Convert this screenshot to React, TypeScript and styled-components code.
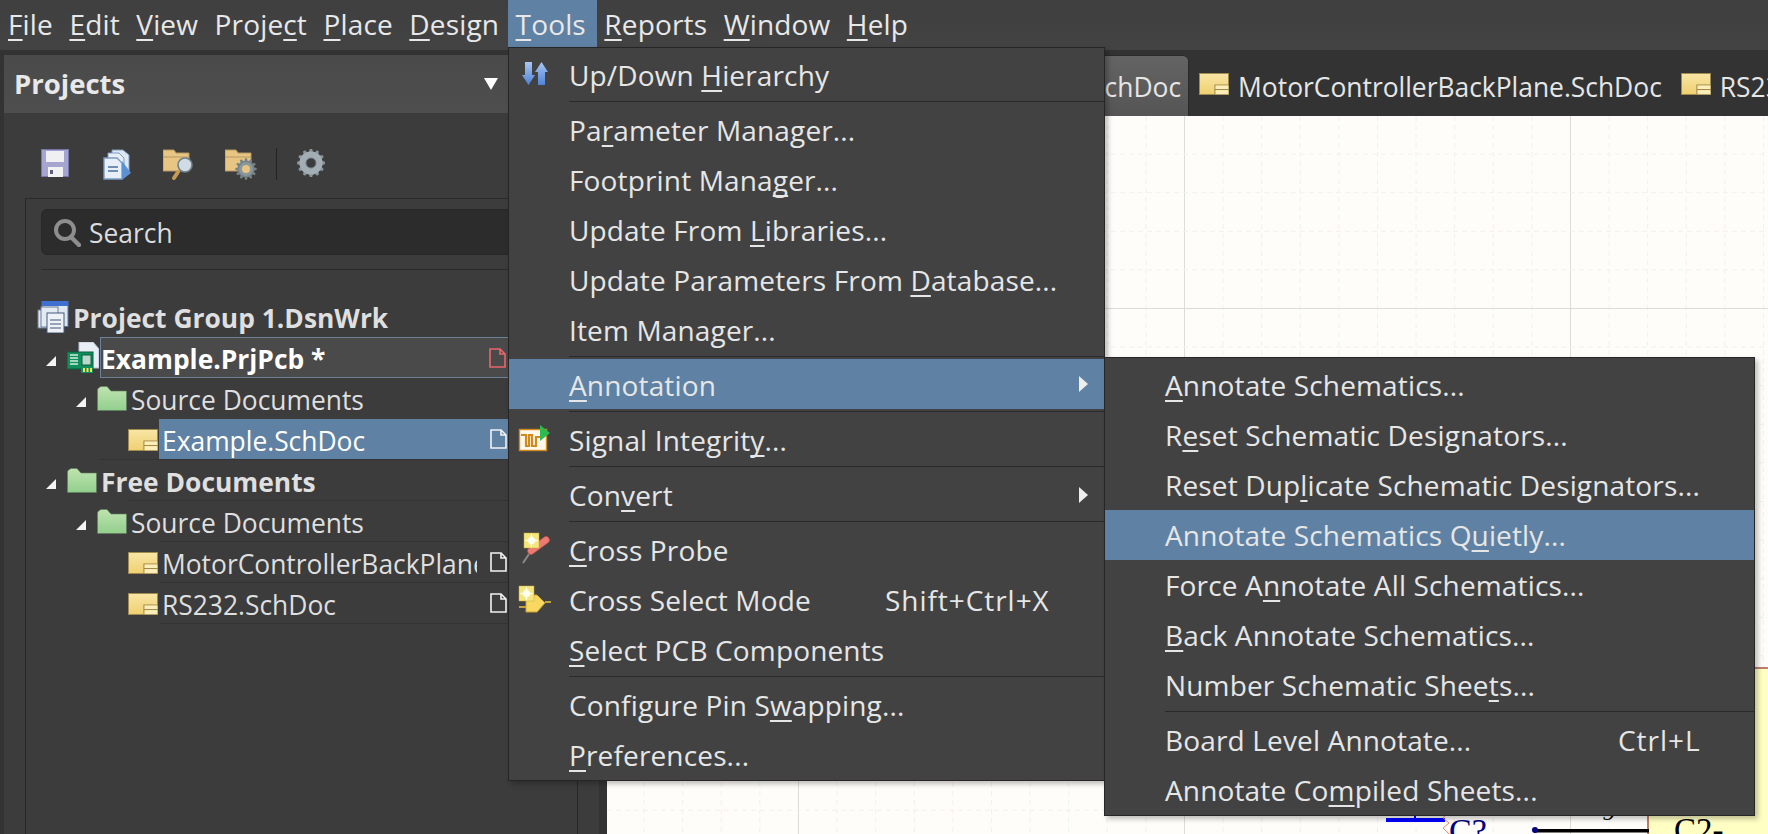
import React from "react";
import styled, { createGlobalStyle } from "styled-components";

const FONT = `"Open Sans", "Noto Sans", sans-serif`;

const Global = createGlobalStyle`
  html, body { margin: 0; padding: 0; background: #3c3c3c; overflow: hidden; }
  * { box-sizing: border-box; }
`;

const Root = styled.div`
  position: relative; width: 1768px; height: 834px; overflow: hidden;
  display: flex; flex-direction: column;
  font-family: ${FONT}; font-size: 26.4px; color: #e6e6e6;
`;
const MenuBar = styled.div`
  height: 50px; flex: none; display: flex; gap: 0.5px; background: linear-gradient(#3f3f3f, #434343);
  padding-bottom: 3px; font-size: 28px; letter-spacing: 0.15px;
`;
const MenuTitle = styled.div<{ $open?: boolean }>`
  padding: 0 8px; display: flex; align-items: center; white-space: nowrap; height: 47px;
  background: ${(p) => (p.$open ? "#5f81a3" : "transparent")};
  color: #e8e8e8;
  padding-right: ${(p) => (p.$open ? "11px" : "8px")};
  margin-right: ${(p) => (p.$open ? "-1px" : "0")};
`;
const U = styled.span`
  text-decoration: underline; text-decoration-thickness: 1.5px; text-underline-offset: 4px;
  text-decoration-skip-ink: none;
`;
const Main = styled.div`flex: 1; display: flex; min-height: 0; background: #333;`;
const LeftStrip = styled.div`width: 4px; flex: none; background: #333;`;
const Panel = styled.div`
  width: 595px; flex: none; margin-top: 5px; background: #3c3c3c; display: flex; flex-direction: column;
`;
const PanelHeader = styled.div`
  height: 58px; flex: none; background: linear-gradient(#4a4a4a, #4e4e4e); display: flex; align-items: center;
  padding: 0 101px 2px 10px; font-weight: 700; font-size: 27.5px; color: #e8e8e8;
`;
const HeaderCaret = styled.div`
  margin: 2px 0 0 auto; width: 0; height: 0;
  border-left: 7px solid transparent; border-right: 7px solid transparent; border-top: 12px solid #fff;
`;
const Toolbar = styled.div`
  height: 85px; flex: none; display: flex; align-items: flex-start; padding: 36px 0 0 37px;
`;
const ToolSlot = styled.div<{ $w: number }>`width: ${(p) => p.$w}px; height: 32px; flex: none;`;
const ToolSep = styled.div`width: 1px; height: 32px; background: #252525; flex: none; margin: -1px 20px 0 0;`;
const InnerBox = styled.div`
  flex: 1; margin-left: 21px; width: 553px; border-left: 1px solid #262626; border-top: 1px solid #2a2a2a;
  border-right: 1px solid #262626; padding-top: 10px; display: flex; flex-direction: column;
`;
const SearchBox = styled.div`
  margin: 0 16px 0 15px; height: 46px; background: #2c2c2c; border: 1px solid #272727; border-radius: 6px;
  display: flex; align-items: center; padding: 1px 0 0 11px; gap: 8px; color: #dcdcdc;
`;
const SearchRule = styled.div`margin: 14px 0 26px 15px; height: 1px; background: #2a2a2a;`;
const Tree = styled.div`display: flex; flex-direction: column;`;
const Row = styled.div<{ $indent: number; $line?: number; $bold?: boolean }>`
  height: 41px; flex: none; position: relative; display: flex; align-items: center;
  padding-left: ${(p) => p.$indent}px;
  font-weight: ${(p) => (p.$bold ? 700 : 400)};
  &::after {
    content: ""; position: absolute; left: ${(p) => p.$line ?? 0}px; right: 0; bottom: 0; height: 1px;
    background: ${(p) => (p.$line === undefined ? "transparent" : "#333")};
  }
`;
const Expander = styled.svg`width: 10px; height: 10px; flex: none; margin-right: 11px; margin-top: 6px;`;
const Label = styled.div<{ $sel?: "focus" | "active"; $white?: boolean }>`
  flex: 1; min-width: 0; align-self: stretch; display: flex; align-items: center; position: relative;
  padding: 2px 100px 0 ${(p) => (p.$sel === "focus" ? 0 : 3)}px; margin-left: 1px; white-space: nowrap;
  color: ${(p) => (p.$white ? "#fff" : "#dfdfdf")};
  background: ${(p) => (p.$sel === "active" ? "#5f81a3" : p.$sel === "focus" ? "#4a4a4a" : "transparent")};
  border: ${(p) => (p.$sel === "focus" ? "1px solid #6c8196" : "none")};
`;
const LabelClip = styled.span`flex: 1; min-width: 0; overflow: hidden;`;
const TreeDoc = styled.svg`position: absolute; right: 70px; top: 10px; width: 17px; height: 20px;`;

const Gutter = styled.div`width: 8px; flex: none; background: #333;`;
const Workspace = styled.div`flex: 1; min-width: 0; display: flex; flex-direction: column;`;
const TabStrip = styled.div`
  height: 66px; flex: none; background: #333; display: flex; align-items: flex-end; padding-left: 320px;
  overflow: hidden; white-space: nowrap;
`;
const Tab = styled.div<{ $active?: boolean }>`
  height: 61px; flex: none; display: flex; align-items: center; gap: ${(p) => (p.$active ? 10 : 9)}px;
  padding: 3px ${(p) => (p.$active ? 8 : 9)}px 0 ${(p) => (p.$active ? 11 : 10)}px;
  background: ${(p) => (p.$active ? "linear-gradient(#646464, #555)" : "transparent")};
  border-radius: 6px 6px 0 0;
  box-shadow: ${(p) => (p.$active ? "inset 0 1px 0 #2a2a2a, inset -1px 0 0 #2a2a2a" : "none")};
  color: #e6e6e6;
`;
const Canvas = styled.div`flex: 1; min-height: 0; position: relative; background: #fffdf9;`;
const CanvasArt = styled.svg`display: block; width: 100%; height: 100%;`;

const Menu = styled.div<{ $left: number; $top: number; $width: number }>`
  position: absolute; left: ${(p) => p.$left}px; top: ${(p) => p.$top}px; width: ${(p) => p.$width}px;
  background: #424242; border: 1px solid #262626; padding: 2px 0 0;
  box-shadow: 3px 3px 5px rgba(0, 0, 0, 0.25);
  font-size: 28px; letter-spacing: 0.15px;
`;
const Item = styled.div<{ $hl?: boolean; $left: number; $nudge?: boolean }>`
  height: 50px; display: flex; align-items: center; position: relative;
  padding-left: ${(p) => p.$left}px; white-space: nowrap; color: #e6e6e6;
  background: ${(p) => (p.$hl ? "#5f81a3" : "transparent")};
  ${(p) => p.$nudge && "margin-top: -1px; margin-bottom: 1px; padding-top: 2px;"}
`;
const ItemIcon = styled.svg`position: absolute; left: 12px; top: 8px; width: 34px; height: 34px; overflow: visible;`;
const Shortcut = styled.span<{ $x: number }>`position: absolute; left: ${(p) => p.$x}px; letter-spacing: 0.95px;`;
const SubArrow = styled.div`
  position: absolute; right: 16px; top: 17px; width: 0; height: 0;
  border-top: 8px solid transparent; border-bottom: 8px solid transparent; border-left: 9px solid #eee;
`;
const Sep = styled.div<{ $left: number }>`
  height: 5px; padding-top: 1px; margin-left: ${(p) => p.$left}px;
  &::before { content: ""; display: block; height: 1px; background: #2a2a2a; }
`;

function mn(s: string) {
  const i = s.indexOf("_");
  if (i < 0) return s;
  return (
    <>
      {s.slice(0, i)}
      <U>{s[i + 1]}</U>
      {s.slice(i + 2)}
    </>
  );
}

const Tri = () => (
  <Expander viewBox="0 0 10 10"><polygon points="10,0 10,10 0,10" fill="#f4f4f4" /></Expander>
);

const Folder = ({ w = 30 }: { w?: number }) => (
  <svg width={w} height="25" viewBox="0 0 30 25" style={{ flex: "none" }}>
    <defs><linearGradient id="fg" x1="0" y1="0" x2="0" y2="1"><stop offset="0" stopColor="#bfe3b0" /><stop offset="1" stopColor="#92cf8c" /></linearGradient></defs>
    <path d="M0.5 24.5V4Q0.5 3 1.5 2L4 0.5H10L14 5H29.5V24.5Z" fill="url(#fg)" stroke="#5f7a5c" strokeWidth="0.6" />
  </svg>
);
const Sch = ({ tab }: { tab?: boolean }) => (
  <svg width="30" height="22" viewBox="0 0 30 22" style={{ flex: "none", marginBottom: tab ? 6 : 0 }}>
    <defs><linearGradient id="sg" x1="0" y1="0" x2="0" y2="1"><stop offset="0" stopColor="#f8e6a6" /><stop offset="1" stopColor="#f0d070" /></linearGradient></defs>
    <rect x="0.5" y="0.5" width="29" height="21" fill="url(#sg)" stroke="#a08a50" />
    <path d="M16 21.5V12H29.5M16 16.5H29.5" fill="none" stroke="#a08a50" strokeWidth="1.2" />
    <rect x="16.6" y="12.6" width="12.8" height="3.4" fill="#fbeeb8" />
    <rect x="16.6" y="17.2" width="12.8" height="4" fill="#fbeeb8" />
  </svg>
);
const Doc = ({ red }: { red?: boolean }) => (
  <TreeDoc viewBox="0 0 17 20">
    <path d="M1 1H11L16 6V19H1Z M11 1V6H16" fill="none" stroke={red ? "#e8666c" : "#f2f2f2"} strokeWidth="1.6" />
  </TreeDoc>
);

const SaveIcon = () => (
  <svg width="28" height="28" viewBox="0 0 28 28">
    <rect width="28" height="28" fill="#7676aa" />
    <rect x="1" y="1" width="26" height="26" fill="#a5a5cf" />
    <rect x="5" y="2" width="18" height="11" fill="#f0f0f2" />
    <rect x="7" y="18" width="15" height="10" fill="#f2f2f2" />
    <rect x="9" y="21" width="3" height="4" fill="#5d5d80" />
  </svg>
);
const DocsIcon = () => (
  <svg width="29" height="32" viewBox="0 0 29 32">
    <path d="M9 1H20L26 6V24H9Z" fill="#dfe8f2" stroke="#7c9cc4" />
    <path d="M5 4H16L21 9V27H5Z" fill="#e8eef6" stroke="#7c9cc4" />
    <path d="M1 9H14L19 14V30H1Z" fill="#e9eff8" stroke="#7c9cc4" strokeWidth="1.4" />
    <path d="M5 18H15M5 22H15" stroke="#6f8fb5" strokeWidth="2" />
    <polygon points="19,12 28,24 19,31" fill="#5c90d0" />
  </svg>
);
const FolderMag = () => (
  <svg width="33" height="32" viewBox="0 0 33 32">
    <path d="M0 22V1H11L13 4H26V22Z" fill="#e8c583" stroke="#b39a62" />
    <path d="M0 8H26" stroke="#b39a62" />
    <path d="M15 23L11 29" stroke="#c69a52" strokeWidth="4" strokeLinecap="round" />
    <circle cx="22" cy="16" r="7" fill="#cfdce6" stroke="#6f8088" strokeWidth="1.6" />
  </svg>
);
const gearPath = (cx: number, cy: number, r: number, t: number) => {
  const pts: string[] = [];
  for (let i = 0; i < 12; i++) {
    const a = (i / 12) * Math.PI * 2;
    const w = Math.PI / 18;
    pts.push(`${cx + r * Math.cos(a - w)},${cy + r * Math.sin(a - w)}`);
    pts.push(`${cx + (r + t) * Math.cos(a - w / 2)},${cy + (r + t) * Math.sin(a - w / 2)}`);
    pts.push(`${cx + (r + t) * Math.cos(a + w / 2)},${cy + (r + t) * Math.sin(a + w / 2)}`);
    pts.push(`${cx + r * Math.cos(a + w)},${cy + r * Math.sin(a + w)}`);
  }
  return pts.join(" ");
};
const FolderGear = () => (
  <svg width="33" height="32" viewBox="0 0 33 32">
    <path d="M0 22V1H11L13 4H26V22Z" fill="#e8c583" stroke="#b39a62" />
    <path d="M0 8H26" stroke="#b39a62" />
    <polygon points={gearPath(21, 20, 8.5, 2.2)} fill="#768288" />
    <circle cx="21" cy="20" r="7" fill="#8a979d" />
    <circle cx="21" cy="20" r="4" fill="#e8c583" />
  </svg>
);
const GearIcon = () => (
  <svg width="28" height="28" viewBox="0 0 28 28">
    <polygon points={gearPath(14, 14, 11.5, 2.5)} fill="#8a959b" />
    <circle cx="14" cy="14" r="11.5" fill="#a2aeb4" />
    <circle cx="14" cy="14" r="5" fill="#3c3c3c" stroke="#6f7a80" />
  </svg>
);
const SearchIcon = () => (
  <svg width="28" height="28" viewBox="0 0 28 28" style={{ flex: "none" }}>
    <circle cx="12" cy="11" r="9" fill="none" stroke="#8e8e8e" strokeWidth="4" />
    <path d="M18 18L26 26" stroke="#8e8e8e" strokeWidth="4.5" strokeLinecap="round" />
  </svg>
);
const GroupIcon = () => (
  <svg width="32" height="32" viewBox="0 0 32 32" style={{ flex: "none" }}>
    <rect x="5" y="0.5" width="26" height="25" fill="#dfe6f0" stroke="#5577aa" />
    <rect x="5" y="0" width="26" height="5" fill="#3f6fd0" />
    <rect x="1" y="9" width="17" height="18" fill="#dfe6f0" stroke="#6f8099" />
    <rect x="4" y="6" width="17" height="20" fill="#e4eaf2" stroke="#6f8099" />
    <rect x="10" y="12" width="17" height="20" fill="#eef2f8" stroke="#44587a" />
    <path d="M13 19H24M13 23H24M13 27H24" stroke="#7b8ba3" strokeWidth="1.5" />
  </svg>
);
const PcbIcon = () => (
  <svg width="32" height="31" viewBox="0 0 32 31" style={{ flex: "none" }}>
    <path d="M12 0H26L32 7V26H12Z" fill="#e8edf6" stroke="#b8c4d8" />
    <rect x="0" y="10" width="26" height="17" fill="#0f8f5c" stroke="#0a5f3d" />
    <rect x="15" y="13" width="9" height="10" fill="#bcd8cc" stroke="#0a5f3d" />
    <path d="M3 13H11M3 16H11M3 19H11M3 22H11" stroke="#d2f0e0" strokeWidth="1.6" />
    <rect x="14" y="25" width="12" height="6" fill="#0f8f5c" />
    <path d="M17 26V30M20.5 26V30M24 26V30" stroke="#e8e860" strokeWidth="2" />
  </svg>
);

type MI = { kind: "sep" } | { kind: "item"; text: string; hl?: boolean; arrow?: boolean; short?: string; icon?: React.ReactNode };

const Spark = ({ x, y }: { x: number; y: number }) => (
  <g>
    <rect x={x} y={y} width="15" height="15" fill="#f6e67e" stroke="#c4a83a" strokeWidth="0.5" />
    <circle cx={x + 7.5} cy={y + 7.5} r="3.5" fill="#fffff4" />
    <path d={`M${x + 7.5} ${y}L${x + 9} ${y + 6}L${x + 15} ${y + 7.5}L${x + 9} ${y + 9}L${x + 7.5} ${y + 15}L${x + 6} ${y + 9}L${x} ${y + 7.5}L${x + 6} ${y + 6}Z`} fill="#fffff2" />
  </g>
);

const mainItems: MI[] = [
  { kind: "item", text: "Up/Down _Hierarchy", icon: (
    <ItemIcon viewBox="0 0 34 34">
      <defs><linearGradient id="ar" x1="0" y1="0" x2="0" y2="1"><stop offset="0" stopColor="#a8c6f0" /><stop offset="1" stopColor="#4f82d8" /></linearGradient></defs>
      <path d="M4 4H11V17H14L7.5 27L1 17H4Z" fill="url(#ar)" />
      <path d="M20.5 4L27 14H24V27H17V14H14Z" fill="url(#ar)" />
    </ItemIcon>) },
  { kind: "sep" },
  { kind: "item", text: "Pa_rameter Manager..." },
  { kind: "item", text: "Footprint Mana_ger..." },
  { kind: "item", text: "Update From _Libraries..." },
  { kind: "item", text: "Update Parameters From _Database..." },
  { kind: "item", text: "Item Manager..." },
  { kind: "sep" },
  { kind: "item", text: "_Annotation", hl: true, arrow: true },
  { kind: "sep" },
  { kind: "item", text: "Signal Integrit_y...", icon: (
    <ItemIcon viewBox="0 0 34 34">
      <rect x="-1.5" y="6.5" width="27" height="21" fill="#fff8ea" stroke="#d08a1e" strokeWidth="1.4" />
      <path d="M0 12H5V23H8V12H11V23H15V14H19" fill="none" stroke="#d08a1e" strokeWidth="2.2" />
      <polygon points="19,2 29,10 19,18" fill="#2dba4e" />
    </ItemIcon>) },
  { kind: "sep" },
  { kind: "item", text: "Con_vert", arrow: true },
  { kind: "sep" },
  { kind: "item", text: "_Cross Probe", icon: (
    <ItemIcon viewBox="0 0 34 34">
      <path d="M8 21L2 30" stroke="#8a8a8a" strokeWidth="2" />
      <path d="M10 18L25 7" stroke="#b8524c" strokeWidth="7.5" strokeLinecap="round" />
      <path d="M10 18L25 7" stroke="#ec7a70" strokeWidth="6" strokeLinecap="round" />
      <Spark x={3} y={0} />
    </ItemIcon>) },
  { kind: "item", text: "Cross Select Mode", short: "Shift+Ctrl+X", icon: (
    <ItemIcon viewBox="0 0 34 34">
      <path d="M-2 24H5M24 19H30" stroke="#c0a23e" strokeWidth="1.8" />
      <path d="M5 12H16L24 20L16 29H5Z" fill="#f8d860" stroke="#c8a030" />
      <Spark x={-2} y={3} />
    </ItemIcon>) },
  { kind: "item", text: "_Select PCB Components" },
  { kind: "sep" },
  { kind: "item", text: "Configure Pin S_wapping..." },
  { kind: "item", text: "_Preferences..." },
];
const subItems: MI[] = [
  { kind: "item", text: "_Annotate Schematics..." },
  { kind: "item", text: "R_eset Schematic Designators..." },
  { kind: "item", text: "Reset Dup_licate Schematic Designators..." },
  { kind: "item", text: "Annotate Schematics Q_uietly...", hl: true },
  { kind: "item", text: "Force A_nnotate All Schematics..." },
  { kind: "item", text: "_Back Annotate Schematics..." },
  { kind: "item", text: "Number Schematic Shee_ts..." },
  { kind: "sep" },
  { kind: "item", text: "Board Level Annotate...", short: "Ctrl+L" },
  { kind: "item", text: "Annotate Co_mpiled Sheets..." },
];

const MenuList = ({ items, left, shortX, nudge }: { items: MI[]; left: number; shortX: number; nudge?: boolean }) => (
  <>
    {items.map((it, i) =>
      it.kind === "sep" ? (
        <Sep key={i} $left={left} />
      ) : (
        <Item key={i} $hl={it.hl} $left={left} $nudge={nudge && it.hl}>
          {it.icon}
          <span>{mn(it.text)}</span>
          {it.short && <Shortcut $x={shortX}>{it.short}</Shortcut>}
          {it.arrow && <SubArrow />}
        </Item>
      )
    )}
  </>
);

const GridArt = () => {
  const xs: number[] = [];
  const ys: number[] = [];
  for (let i = -16; i < 16; i++) xs.push(i);
  for (let i = -6; i < 15; i++) ys.push(i);
  const isMajor = (i: number) => ((i % 10) + 10) % 10 === 0;
  return (
    <CanvasArt viewBox="607 116 1161 718" preserveAspectRatio="none">
      {xs.map((i) => {
        const x = 1184.5 + i * 38.6;
        return <line key={"x" + i} x1={x} x2={x} y1={116} y2={834} stroke={isMajor(i) ? "#dedcd6" : "#f3f1ea"} strokeWidth="1" strokeDasharray={isMajor(i) ? undefined : "5 4"} />;
      })}
      {ys.map((i) => {
        const y = 308.5 + i * 38.6;
        return <line key={"y" + i} y1={y} y2={y} x1={607} x2={1768} stroke={isMajor(i) ? "#dedcd6" : "#f3f1ea"} strokeWidth="1" strokeDasharray={isMajor(i) ? undefined : "5 4"} />;
      })}
      <rect x="1648" y="668" width="130" height="176" fill="#ffffc4" stroke="#800000" strokeWidth="1" />
      <rect x="1386" y="818" width="59" height="4" fill="#0000ff" />
      <rect x="1414" y="812" width="2" height="8" fill="#0000ff" />
      <path d="M1448 812L1443 818L1449 823L1443 828L1449 834" fill="none" stroke="#e8906a" strokeWidth="1" />
      <text x="1449" y="842" fontFamily="'Liberation Serif', serif" fontSize="34" fill="#000080">C?</text>
      <text x="1602" y="820" fontFamily="'Liberation Serif', serif" fontSize="26" fill="#000">9</text>
      <rect x="1534" y="829" width="115" height="3.5" fill="#000" />
      <circle cx="1535" cy="830" r="3" fill="#000080" />
      <text x="1674" y="841" fontFamily="'Liberation Serif', serif" fontSize="33" fill="#000">C2-</text>
    </CanvasArt>
  );
};

export default function App() {
  return (
    <>
      <Global />
      <Root>
        <MenuBar>
          {["_File", "_Edit", "_View", "Proje_ct", "_Place", "_Design"].map((t) => (
            <MenuTitle key={t}>{mn(t)}</MenuTitle>
          ))}
          <MenuTitle $open>{mn("_Tools")}</MenuTitle>
          {["_Reports", "_Window", "_Help"].map((t) => (
            <MenuTitle key={t}>{mn(t)}</MenuTitle>
          ))}
        </MenuBar>
        <Main>
          <LeftStrip />
          <Panel>
            <PanelHeader>
              Projects
              <HeaderCaret />
            </PanelHeader>
            <Toolbar>
              <ToolSlot $w={62}><SaveIcon /></ToolSlot>
              <ToolSlot $w={60}><DocsIcon /></ToolSlot>
              <ToolSlot $w={62}><FolderMag /></ToolSlot>
              <ToolSlot $w={51}><FolderGear /></ToolSlot>
              <ToolSep />
              <ToolSlot $w={30}><GearIcon /></ToolSlot>
            </Toolbar>
            <InnerBox>
              <SearchBox>
                <SearchIcon />
                Search
              </SearchBox>
              <SearchRule />
              <Tree>
                <Row $indent={11} $bold>
                  <GroupIcon />
                  <Label>Project Group 1.DsnWrk</Label>
                </Row>
                <Row $indent={20} $bold>
                  <Tri />
                  <PcbIcon />
                  <Label $sel="focus" $white>Example.PrjPcb *<Doc red /></Label>
                </Row>
                <Row $indent={50}>
                  <Tri />
                  <Folder />
                  <Label>Source Documents</Label>
                </Row>
                <Row $indent={102} $line={73}>
                  <Sch />
                  <Label $sel="active" $white>Example.SchDoc<Doc /></Label>
                </Row>
                <Row $indent={20} $bold $line={103}>
                  <Tri />
                  <Folder />
                  <Label>Free Documents</Label>
                </Row>
                <Row $indent={50} $line={133}>
                  <Tri />
                  <Folder />
                  <Label>Source Documents</Label>
                </Row>
                <Row $indent={102} $line={133}>
                  <Sch />
                  <Label><LabelClip>MotorControllerBackPlane.SchDoc</LabelClip><Doc /></Label>
                </Row>
                <Row $indent={102} $line={133}>
                  <Sch />
                  <Label>RS232.SchDoc<Doc /></Label>
                </Row>
              </Tree>
            </InnerBox>
          </Panel>
          <Gutter />
          <Workspace>
            <TabStrip>
              <Tab $active><Sch tab />Example.SchDoc</Tab>
              <Tab><Sch tab />MotorControllerBackPlane.SchDoc</Tab>
              <Tab><Sch tab />RS232.SchDoc</Tab>
            </TabStrip>
            <Canvas><GridArt /></Canvas>
          </Workspace>
        </Main>
        <Menu $left={508} $top={47} $width={597}>
          <MenuList items={mainItems} left={60} shortX={376} nudge />
        </Menu>
        <Menu $left={1104} $top={357} $width={651}>
          <MenuList items={subItems} left={60} shortX={513} />
        </Menu>
      </Root>
    </>
  );
}
